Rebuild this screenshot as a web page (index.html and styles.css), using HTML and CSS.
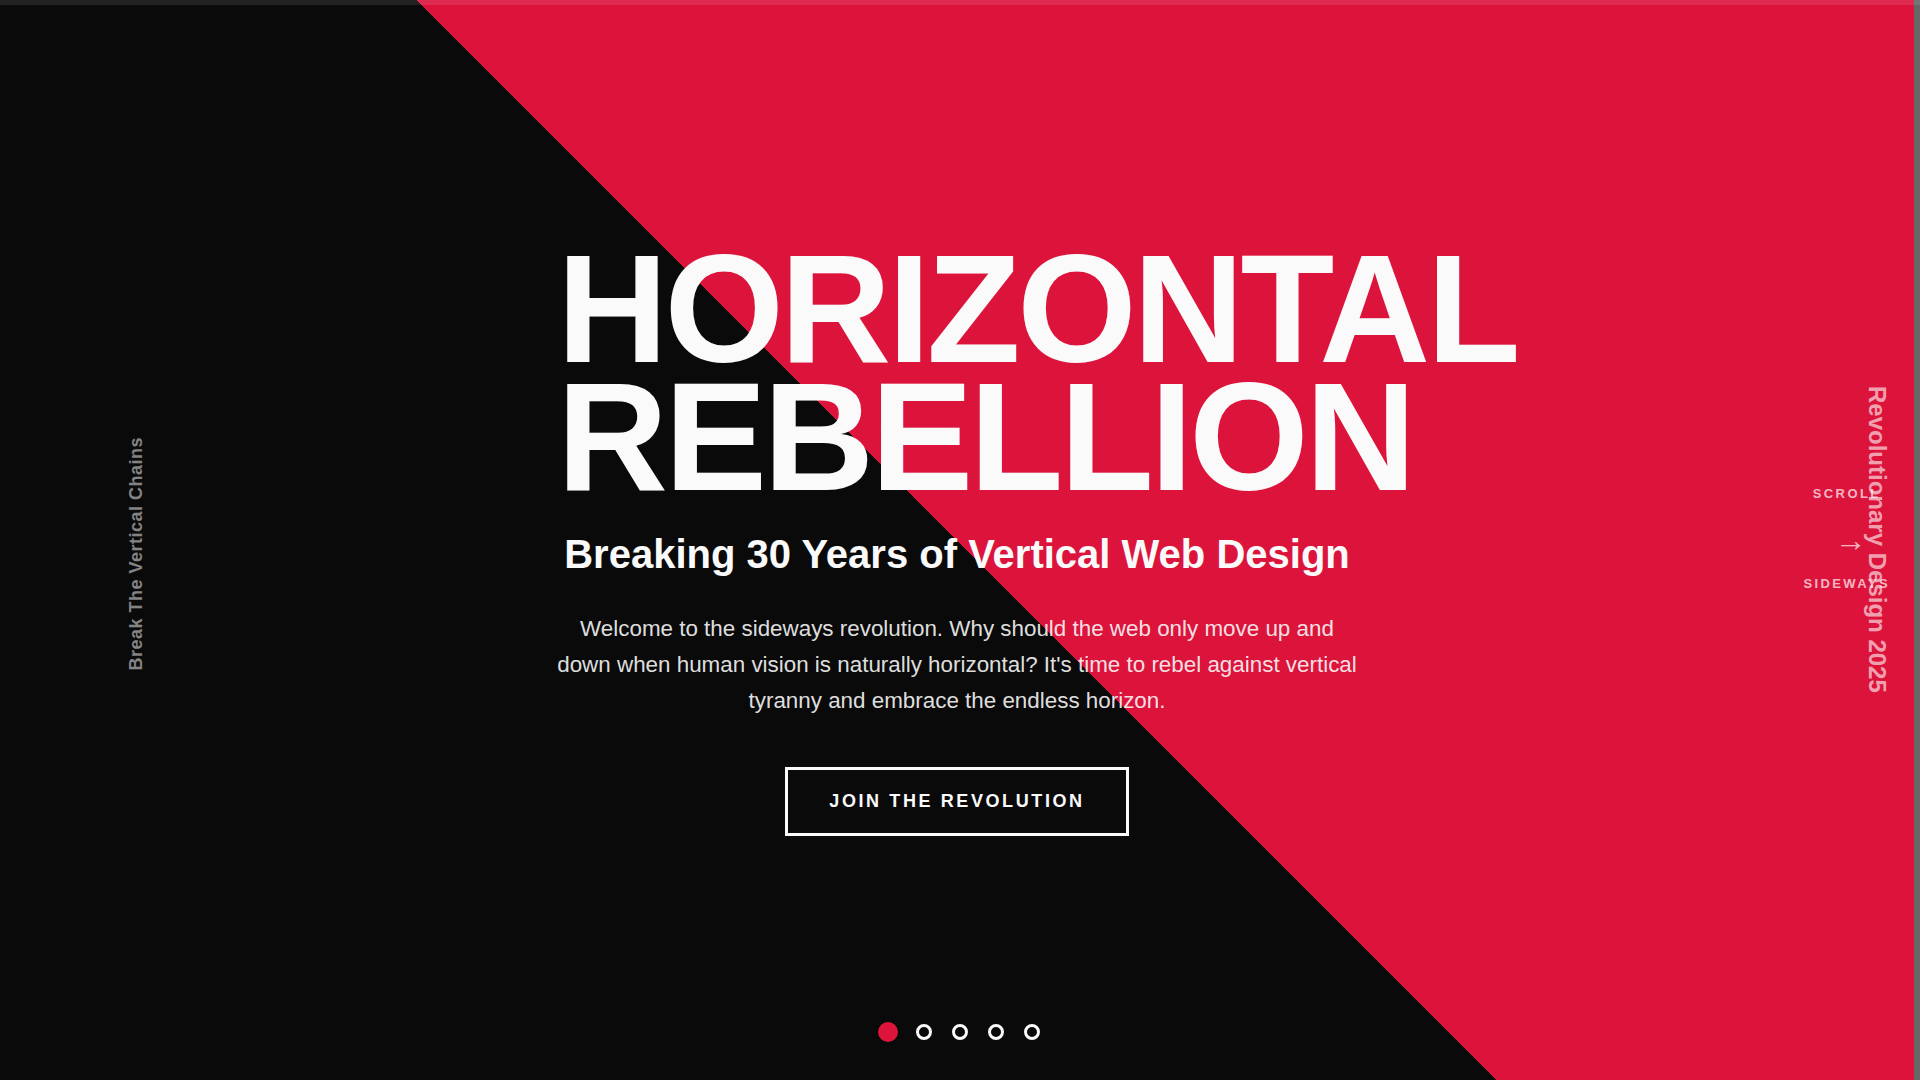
FILE: index.html
```html
<!DOCTYPE html>
<html lang="en">
<head>
<meta charset="utf-8">
<title>Horizontal Rebellion</title>
<link rel="stylesheet" href="styles.css">
</head>
<body>
<div class="progress"></div>
<div class="page">
  <main class="hero">
    <div class="side-left">Break The Vertical Chains</div>
    <div class="content">
      <h1 class="title">HORIZONTAL REBELLION</h1>
      <h2 class="subtitle">Breaking 30 Years of Vertical Web Design</h2>
      <p class="lead">Welcome to the sideways revolution. Why should the web only move up and down when human vision is naturally horizontal? It's time to rebel against vertical tyranny and embrace the endless horizon.</p>
      <a class="cta" href="#">JOIN THE REVOLUTION</a>
    </div>
    <div class="scroll-hint">
      <span class="hint-text">SCROLL</span>
      <span class="hint-arrow">→</span>
      <span class="hint-text">SIDEWAYS</span>
    </div>
    <div class="side-right">Revolutionary Design 2025</div>
    <div class="dots">
      <span class="dot active"></span>
      <span class="dot"></span>
      <span class="dot"></span>
      <span class="dot"></span>
      <span class="dot"></span>
    </div>
  </main>
  <div class="scrollbar"></div>
</div>
</body>
</html>
```

FILE: styles.css
```css
html, body {
  margin: 0;
  padding: 0;
  width: 1920px;
  height: 1080px;
  overflow: hidden;
  background: #0a0a0a;
  font-family: "Liberation Sans", Arial, sans-serif;
}

.page {
  display: flex;
  width: 1920px;
  height: 1080px;
}

.hero {
  position: relative;
  flex: 1;
  height: 1080px;
  background: linear-gradient(45deg, #0a0a0a 50%, #dc143c 50%);
  display: flex;
  align-items: center;
  justify-content: center;
}

.scrollbar {
  width: 6px;
  background: #666666;
}

.progress {
  position: fixed;
  top: 0;
  left: 0;
  width: 1920px;
  height: 5px;
  background: rgba(255, 255, 255, 0.1);
  z-index: 10;
}

.content {
  width: 800px;
  text-align: center;
  color: #fafafa;
}

.title {
  margin: 0 0 30px;
  font-size: 153.6px;
  line-height: 128px;
  font-weight: 700;
  letter-spacing: -0.023em;
  color: #fafafa;
}

.subtitle {
  margin: 0 0 34px;
  font-size: 40px;
  line-height: 46px;
  font-weight: 700;
  color: #fafafa;
}

.lead {
  margin: 0 -4px 48px;
  font-size: 22.4px;
  line-height: 36px;
  color: rgba(250, 250, 250, 0.9);
}

.cta {
  display: inline-block;
  padding: 21px 41px;
  border: 3px solid #fafafa;
  color: #fafafa;
  text-decoration: none;
  font-size: 18px;
  line-height: 21px;
  font-weight: 700;
  letter-spacing: 2.6px;
}

.side-left {
  position: absolute;
  left: 126px;
  top: 437px;
  writing-mode: vertical-rl;
  transform: rotate(180deg);
  font-size: 18px;
  line-height: 21px;
  font-weight: 700;
  letter-spacing: 0.5px;
  color: rgba(255, 255, 255, 0.5);
  white-space: nowrap;
}

.side-right {
  position: absolute;
  left: 1863px;
  top: 386px;
  writing-mode: vertical-rl;
  font-size: 24px;
  line-height: 28px;
  font-weight: 700;
  color: rgba(255, 255, 255, 0.62);
  white-space: nowrap;
}

.scroll-hint {
  position: absolute;
  left: 1845.5px;
  top: 487px;
  transform: translateX(-50%);
  display: flex;
  flex-direction: column;
  align-items: center;
  color: rgba(255, 255, 255, 0.7);
}

.hint-text {
  display: block;
  font-size: 13px;
  line-height: 14px;
  font-weight: 700;
  letter-spacing: 2.4px;
  margin-right: -2.4px;
}

.hint-arrow {
  display: block;
  margin: 27px 0 25px 10px;
  font-size: 32px;
  line-height: 24px;
  font-weight: 400;
}

.dots {
  position: absolute;
  left: 960px;
  top: 1024px;
  transform: translateX(-50%);
  display: flex;
  gap: 20px;
}

.dot {
  display: block;
  width: 16px;
  height: 16px;
  box-sizing: border-box;
  border: 3px solid #fafafa;
  border-radius: 50%;
}

.dot.active {
  background: #dc143c;
  border-color: #dc143c;
  transform: scale(1.25);
}
```
